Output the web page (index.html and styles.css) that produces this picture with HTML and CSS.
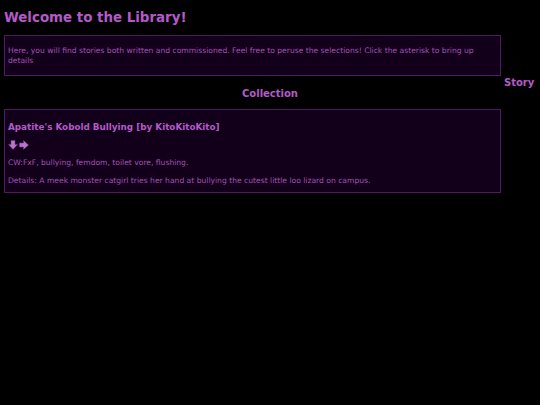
FILE: index.html
```html
<!DOCTYPE html>
<html>
<head>
<meta charset="utf-8">
<link rel="stylesheet" href="styles.css">
</head>
<body>
<h1 class="title">Welcome to the Library!</h1>
<div class="layout">
  <div class="main">
    <div class="box intro">Here, you will find stories both written and commissioned. Feel free to peruse the selections! Click the asterisk to bring up details</div>
  </div>
  <h2 class="side-head">Story</h2>
</div>
<h2 class="section-head">Collection</h2>
<div class="layout">
  <div class="main">
    <div class="box card">
      <h3 class="card-title">Apatite's Kobold Bullying [by KitoKitoKito]</h3>
      <div class="icons">
        <svg class="arrow" width="10" height="10" viewBox="0 0 10 10"><path d="M3 0.5h4v4h2.5L5 9.5 0.5 4.5H3z" fill="#b873cb" stroke="#7a3a8c" stroke-width="0.5"/></svg>
        <svg class="arrow" width="10" height="10" viewBox="0 0 10 10"><path d="M0.5 3h4V0.5L9.5 5 4.5 9.5V7H0.5z" fill="#b873cb" stroke="#7a3a8c" stroke-width="0.5"/></svg>
      </div>
      <p class="line">CW:FxF, bullying, femdom, toilet vore, flushing.</p>
      <p class="line">Details: A meek monster catgirl tries her hand at bullying the cutest little loo lizard on campus.</p>
    </div>
  </div>
</div>
</body>
</html>
```
FILE: styles.css
```css
html, body {
  background: #000;
}
body {
  margin: 0;
  padding: 0 4px;
  font-family: "DejaVu Sans", Verdana, sans-serif;
  color: #a552b8;
}
.title {
  font-size: 13.4px;
  font-weight: bold;
  color: #b45ac8;
  margin: 0;
  padding-top: 10px;
  line-height: 16px;
}
.layout {
  display: flex;
  align-items: flex-start;
}
.main {
  width: 497px;
  flex: none;
}
.box {
  background: #12001a;
  border: 1px solid #4e1a60;
  box-sizing: border-box;
}
.intro {
  margin-top: 9px;
  padding: 10px 12px 10px 3px;
  font-size: 7.6px;
  line-height: 9.5px;
  color: #a552b8;
}
.side-head {
  margin: 51px 0 0 3px;
  font-size: 10px;
  line-height: 12px;
  color: #b45ac8;
}
.section-head {
  margin: -1px 0 0;
  text-align: center;
  font-size: 10px;
  line-height: 12px;
  color: #b45ac8;
}
.card {
  margin-top: 9px;
  padding: 11px 3px 6px;
}
.card-title {
  margin: 0;
  font-size: 8.8px;
  line-height: 12px;
  color: #b45ac8;
}
.icons {
  margin-top: 7px;
  display: flex;
  gap: 1px;
  height: 10px;
}
.line {
  margin: 8px 0 0;
  font-size: 7.6px;
  line-height: 10px;
  color: #a552b8;
}
```
